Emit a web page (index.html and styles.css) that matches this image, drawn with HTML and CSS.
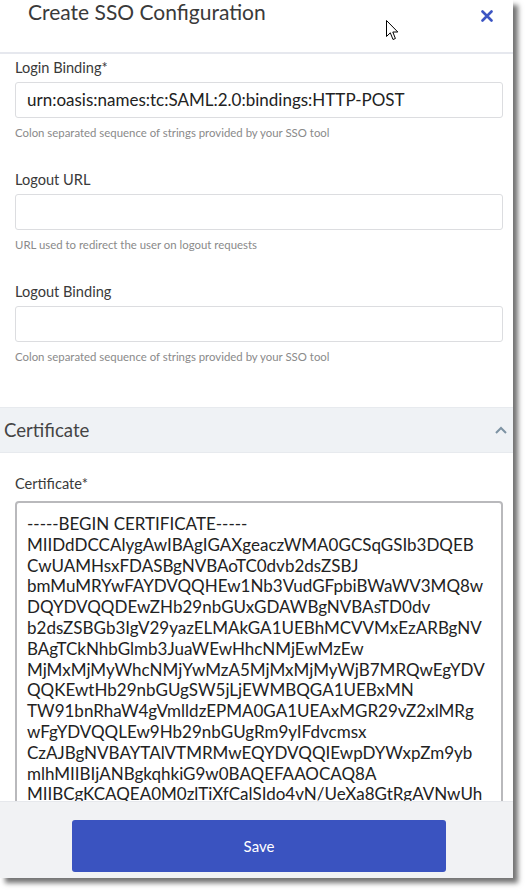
FILE: index.html
```html
<!DOCTYPE html>
<html>
<head>
<meta charset="utf-8">
<link rel="stylesheet" href="styles.css">
</head>
<body>
<div class="panel">
  <div class="header">
    <h1 class="title">Create SSO Configuration</h1>
    <button class="close" aria-label="Close">
      <svg width="12" height="12" viewBox="0 0 12 12"><path d="M1.5 1.5 L10.5 10.5 M10.5 1.5 L1.5 10.5" stroke="#3c55c3" stroke-width="2.6" stroke-linecap="round"/></svg>
    </button>
  </div>
  <div class="body">
    <div class="fields">
      <div class="field">
        <label class="label">Login Binding*</label>
        <div class="input">urn:oasis:names:tc:SAML:2.0:bindings:HTTP-POST</div>
        <div class="help">Colon separated sequence of strings provided by your SSO tool</div>
      </div>
      <div class="field">
        <label class="label">Logout URL</label>
        <div class="input"></div>
        <div class="help">URL used to redirect the user on logout requests</div>
      </div>
      <div class="field">
        <label class="label">Logout Binding</label>
        <div class="input"></div>
        <div class="help">Colon separated sequence of strings provided by your SSO tool</div>
      </div>
    </div>
    <div class="section">
      <span class="section-title">Certificate</span>
      <svg class="chevron" width="12" height="8" viewBox="0 0 12 8"><polyline points="1,7 6,2 11,7" fill="none" stroke="#7d93a3" stroke-width="2"/></svg>
    </div>
    <div class="cert-field">
      <label class="label">Certificate*</label>
      <div class="textarea">-----BEGIN CERTIFICATE-----
MIIDdDCCAlygAwIBAgIGAXgeaczWMA0GCSqGSIb3DQEB
CwUAMHsxFDASBgNVBAoTC0dvb2dsZSBJ
bmMuMRYwFAYDVQQHEw1Nb3VudGFpbiBWaWV3MQ8w
DQYDVQQDEwZHb29nbGUxGDAWBgNVBAsTD0dv
b2dsZSBGb3IgV29yazELMAkGA1UEBhMCVVMxEzARBgNV
BAgTCkNhbGlmb3JuaWEwHhcNMjEwMzEw
MjMxMjMyWhcNMjYwMzA5MjMxMjMyWjB7MRQwEgYDV
QQKEwtHb29nbGUgSW5jLjEWMBQGA1UEBxMN
TW91bnRhaW4gVmlldzEPMA0GA1UEAxMGR29vZ2xlMRg
wFgYDVQQLEw9Hb29nbGUgRm9yIFdvcmsx
CzAJBgNVBAYTAlVTMRMwEQYDVQQIEwpDYWxpZm9yb
mlhMIIBIjANBgkqhkiG9w0BAQEFAAOCAQ8A
MIIBCgKCAQEA0M0zlTiXfCalSIdo4vN/UeXa8GtRgAVNwUh</div>
    </div>
  </div>
  <div class="footer">
    <button class="save">Save</button>
  </div>
  <svg class="cursor" width="13" height="21" viewBox="0 0 13 21"><path d="M0.5 0.5 L0.5 16.5 L4.3 12.8 L7 19.5 L9.4 18.5 L6.8 12 L11.8 12 Z" fill="#fff" stroke="#000" stroke-width="1" stroke-linejoin="miter"/></svg>
</div>
</body>
</html>
```
FILE: styles.css
```css
* { box-sizing: border-box; }
html, body { margin: 0; padding: 0; background: #fff; }
body {
  font-family: Lato, "Open Sans", "Liberation Sans", sans-serif;
  color: #333;
  width: 529px;
  height: 893px;
  overflow: hidden;
}
.panel {
  position: relative;
  width: 513px;
  height: 878px;
  background: #fff;
  display: flex;
  flex-direction: column;
  box-shadow: 5px 5px 5px rgba(0, 0, 0, 0.55);
}
.header {
  height: 54px;
  flex: none;
  display: flex;
  align-items: flex-start;
  justify-content: space-between;
  border-bottom: 2px solid #e6e8ee;
  padding: 0 20px 0 28px;
}
.title {
  margin: 0;
  font-size: 21px;
  line-height: 24px;
  font-weight: 400;
  color: #3a3a3a;
}
.close {
  border: 0;
  background: none;
  padding: 0;
  margin-top: 10px;
  width: 12px;
  height: 12px;
  display: flex;
}
.body {
  flex: 1;
  overflow: hidden;
  display: flex;
  flex-direction: column;
}
.fields {
  padding: 4px 10px 0 15px;
}
.field {
  display: flex;
  flex-direction: column;
  padding-bottom: 29px;
}
.field:last-child { padding-bottom: 42px; }
.label {
  font-size: 14.6px;
  line-height: 20px;
  color: #3a3a3a;
  margin-bottom: 4px;
}
.input {
  height: 36px;
  border: 1px solid #dcdde0;
  border-radius: 3px;
  padding: 0 11px;
  font-size: 17px;
  line-height: 34px;
  color: #222;
}
.help {
  margin-top: 7px;
  font-size: 11.4px;
  line-height: 16px;
  color: #8a8a8a;
}
.section {
  flex: none;
  height: 46px;
  background: #eff2f5;
  border-top: 1px solid #e7eaee;
  border-bottom: 1px solid #e7eaee;
  display: flex;
  align-items: center;
  justify-content: space-between;
  padding: 0 6px 0 4px;
}
.section-title {
  font-size: 18.6px;
  color: #444;
}
.chevron { margin-top: -1px; }
.cert-field {
  display: flex;
  flex-direction: column;
  padding: 21px 10px 0 15px;
}
.cert-field .label { margin-bottom: 7px; }
.textarea {
  border: 2px solid #b9b9bc;
  border-radius: 4px;
  padding: 11px 10px 9px 10px;
  font-size: 17px;
  line-height: 20.8px;
  color: #222;
  white-space: pre;
  overflow: hidden;
}
.footer {
  flex: none;
  height: 77px;
  background: #f1f2f4;
  border-top: 1px solid #e6e8ec;
  padding: 18px 0 0 72px;
}
.save {
  width: 374px;
  height: 52px;
  border: 0;
  border-radius: 3px;
  background: #3a53c0;
  color: #fff;
  font-family: Lato, "Open Sans", "Liberation Sans", sans-serif;
  font-size: 15px;
}
.cursor {
  position: absolute;
  left: 386px;
  top: 20px;
}
```
